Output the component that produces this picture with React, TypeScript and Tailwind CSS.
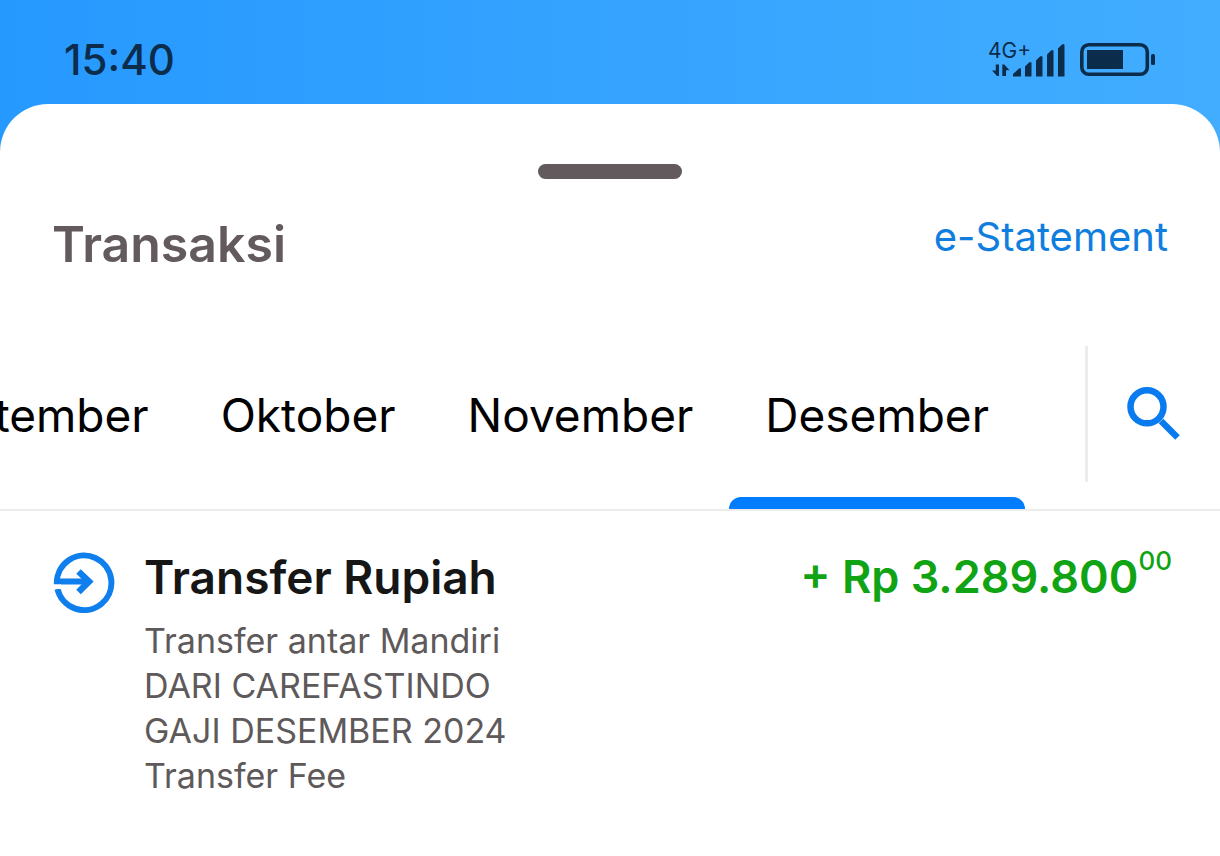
const months = ["September", "Oktober", "November", "Desember"];

const details = [
  "Transfer antar Mandiri",
  "DARI CAREFASTINDO",
  "GAJI DESEMBER 2024",
  "Transfer Fee",
];

function SignalIcon() {
  return (
    <svg viewBox="0 0 78 40" className="h-10 w-[78px]" fill="currentColor" aria-hidden="true">
      <path d="M9 24.500V36H7L2 30.500h3.800v-6zM12.300 36V24.500h2l5.200 5.800h-3.500V36z" />
      <path d="M23 36.500v-2.500l6-5.500q2-1 2 .8V36.500zM35 36.500V26.500l4-4q2.500-1.500 2.500 1V36.500zM46 36.500V20.500l4-4q2.500-1.500 2.500 1V36.500zM57 36.500V14.500l4-4q2.500-1.500 2.500 1V36.500zM68 36.500V8.500L72 4.500q2.500-1.500 2.500 1V36.500z" />
    </svg>
  );
}

function BatteryIcon() {
  return (
    <svg viewBox="0 0 76 34" className="h-[34px] w-19" aria-hidden="true">
      <rect x="1.800" y="1.800" width="65.500" height="29.500" rx="7" fill="none" stroke="currentColor" strokeWidth="3.600" />
      <rect x="7" y="7" width="36" height="19" fill="currentColor" />
      <rect x="71" y="11" width="4" height="11" rx="1.500" fill="currentColor" />
    </svg>
  );
}

function StatusBar() {
  return (
    <header className="flex h-26 items-center justify-between px-16 pt-4 text-[#0c2c4c]">
      <time className="text-[42px] font-medium leading-none">15:40</time>
      <div className="flex items-center gap-3">
        <div className="relative">
          <SignalIcon />
          <span className="absolute top-0 -left-0.5 text-[21px] leading-none">4G+</span>
        </div>
        <BatteryIcon />
      </div>
    </header>
  );
}

function IncomingIcon() {
  return (
    <svg viewBox="0 0 64 64" className="mt-2 size-16 shrink-0" fill="none" stroke="#107fee" strokeWidth="6" aria-hidden="true">
      <path d="M4.800 34.500A27.300 27.300 0 1 1 5.500 40" />
      <path d="M2 32.500h33" />
      <path d="M26.500 22.500l10.500 10L26.500 43" strokeWidth="6.500" />
      <path d="M0 35.500h9V40H0z" fill="#fff" stroke="none" />
    </svg>
  );
}

function SearchIcon() {
  return (
    <svg viewBox="0 0 54 54" className="size-[54px]" fill="none" stroke="#0a7bee" strokeWidth="6.500" aria-hidden="true">
      <circle cx="20" cy="19.800" r="16.500" />
      <path d="M34 34l16.500 16.500" strokeWidth="6.500" />
    </svg>
  );
}

function Tab({ label, active }: { label: string; active: boolean }) {
  return (
    <button
      type="button"
      role="tab"
      aria-selected={active}
      className="flex shrink-0 flex-col"
    >
      <span className="flex flex-1 items-center px-9 pb-3.5 text-[46px] leading-none">{label}</span>
      <span className={active ? "h-3 w-full rounded-t-xl bg-[#007dfe]" : "h-3 w-full"} />
    </button>
  );
}

export default function App() {
  return (
    <div className="flex min-h-screen flex-col bg-linear-to-r from-[#2699ff] to-[#42adff] font-['Inter',sans-serif]">
      <StatusBar />
      <main className="flex-1 rounded-t-[48px] bg-white pt-15">
        <div className="mx-auto h-[15px] w-36 rounded-full bg-[#625a5c]" />
        <div className="flex items-start justify-between px-13 pt-8">
          <h1 className="text-[50px] leading-[66px] font-semibold text-[#625a5c]">Transaksi</h1>
          <a href="#e-statement" className="text-[40px] leading-[52px] text-[#0f7ede]">e-Statement</a>
        </div>
        <nav className="mt-[69px] flex h-[165px] border-b-2 border-[#ececec]">
          <div role="tablist" className="flex min-w-0 flex-1 justify-end overflow-hidden pr-15 text-black">
            {months.map((month) => (
              <Tab key={month} label={month} active={month === "Desember"} />
            ))}
          </div>
          <div className="flex h-34 w-[135px] items-center justify-center border-l-3 border-[#ececec]">
            <button type="button" aria-label="Cari">
              <SearchIcon />
            </button>
          </div>
        </nav>
        <article className="flex items-start pt-[30px] pr-12 pl-13">
          <IncomingIcon />
          <div className="ml-7 flex-1">
            <h2 className="text-[46px] leading-[72px] font-semibold text-[#161616]">Transfer Rupiah</h2>
            <div className="pt-[5px] text-[34px] leading-[45px] text-[#5e595a]">
              {details.map((line) => (
                <p key={line}>{line}</p>
              ))}
            </div>
          </div>
          <p className="flex items-start text-[45px] leading-[72px] font-semibold text-[#10a313]">
            + Rp 3.289.800<sup className="top-0 text-[26px] leading-10 font-medium">00</sup>
          </p>
        </article>
      </main>
    </div>
  );
}
